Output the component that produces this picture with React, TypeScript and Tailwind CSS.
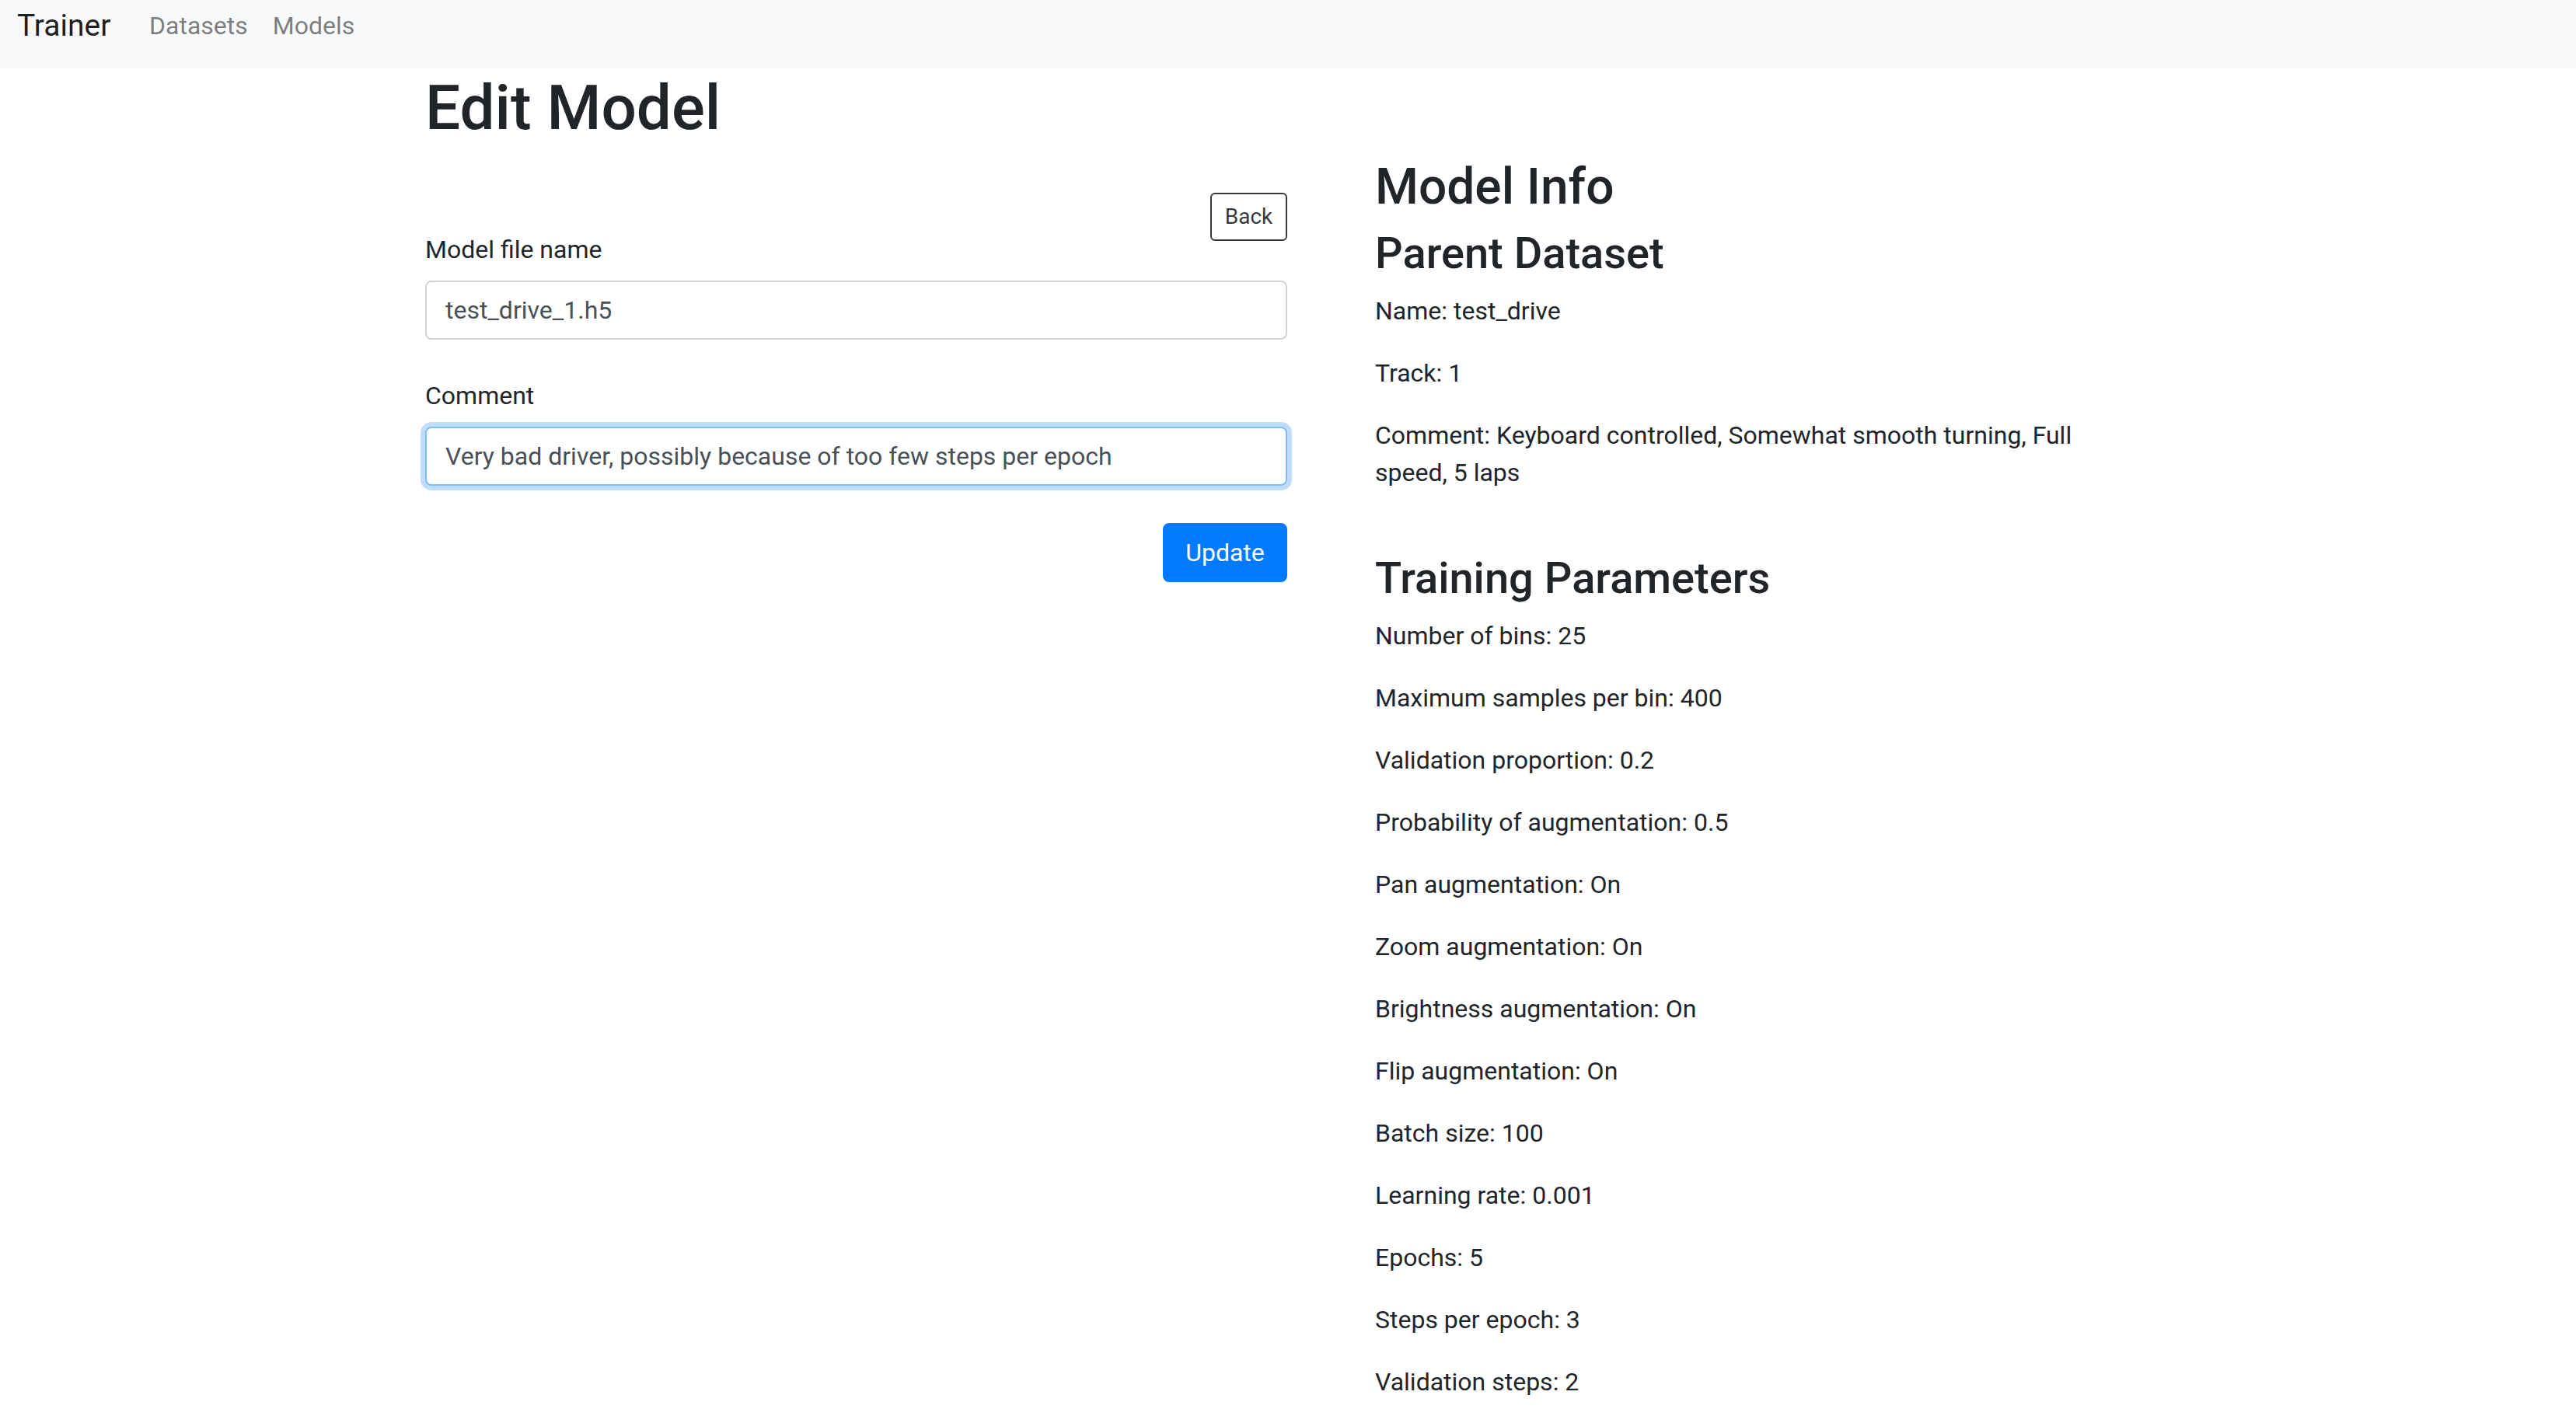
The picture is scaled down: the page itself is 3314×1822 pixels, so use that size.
import React from 'react';

const datasetInfo = [
  'Name: test_drive',
  'Track: 1',
  'Comment: Keyboard controlled, Somewhat smooth turning, Full speed, 5 laps',
];

const trainingParams = [
  'Number of bins: 25',
  'Maximum samples per bin: 400',
  'Validation proportion: 0.2',
  'Probability of augmentation: 0.5',
  'Pan augmentation: On',
  'Zoom augmentation: On',
  'Brightness augmentation: On',
  'Flip augmentation: On',
  'Batch size: 100',
  'Learning rate: 0.001',
  'Epochs: 5',
  'Steps per epoch: 3',
  'Validation steps: 2',
];

export default function App() {
  return (
    <div className="min-h-screen bg-white text-[#212529] font-['Roboto','Liberation_Sans',sans-serif] text-[32px] leading-[48px]">
      {/* Navbar */}
      <nav className="h-[88px] bg-[#f8f9fa] flex items-start pl-[22px]">
        <a className="w-[154px] mt-[3px] text-[39px] leading-[60px] text-black/90">Trainer</a>
        <div className="flex mt-[9px]">
          <a className="px-[16px] text-black/50">Datasets</a>
          <a className="px-[16px] text-black/50">Models</a>
        </div>
      </nav>

      {/* Main container */}
      <div className="ml-[547px] w-[2220px]">
        <h1 className="text-[80px] leading-[96px] font-medium mt-[3px] mb-[13px]">Edit Model</h1>

        <div className="flex gap-[113px]">
          {/* Left: edit form */}
          <div className="w-[1109px] shrink-0">
            <div className="flex justify-end mt-[48px]">
              <button className="w-[99px] h-[62px] border-2 border-[#343a40] rounded-[6px] text-[28px] leading-[42px] text-[#343a40] bg-white">
                Back
              </button>
            </div>

            <form className="-mt-[13px]">
              <label className="block mb-[16px]">Model file name</label>
              <input
                className="block w-full h-[76px] border-2 border-[#ced4da] rounded-[8px] px-[24px] text-[32px] text-[#495057] bg-white outline-none"
                defaultValue="test_drive_1.h5"
              />

              <label className="block mt-[48px] mb-[16px]">Comment</label>
              <input
                className="block w-full h-[76px] border-2 border-[#80bdff] rounded-[8px] px-[24px] text-[32px] text-[#495057] bg-white outline-none shadow-[0_0_0_6px_rgba(0,123,255,0.25)]"
                defaultValue="Very bad driver, possibly because of too few steps per epoch"
              />

              <div className="flex justify-end mt-[48px]">
                <button
                  type="button"
                  className="w-[160px] h-[76px] rounded-[8px] bg-[#007bff] border-2 border-[#007bff] text-white text-[32px] leading-[48px]"
                >
                  Update
                </button>
              </div>
            </form>
          </div>

          {/* Right: model info */}
          <div className="w-[940px] shrink-0">
            <h2 className="text-[64px] leading-[77px] font-medium mt-[2px] mb-[14px]">Model Info</h2>
            <h3 className="text-[56px] leading-[67px] font-medium mb-[16px]">Parent Dataset</h3>
            {datasetInfo.map((line) => (
              <p key={line} className="mb-[32px]">
                {line}
              </p>
            ))}
            <div className="h-[47px]" />
            <h3 className="text-[56px] leading-[67px] font-medium mb-[16px]">Training Parameters</h3>
            {trainingParams.map((line) => (
              <p key={line} className="mb-[32px]">
                {line}
              </p>
            ))}
          </div>
        </div>
      </div>
    </div>
  );
}
